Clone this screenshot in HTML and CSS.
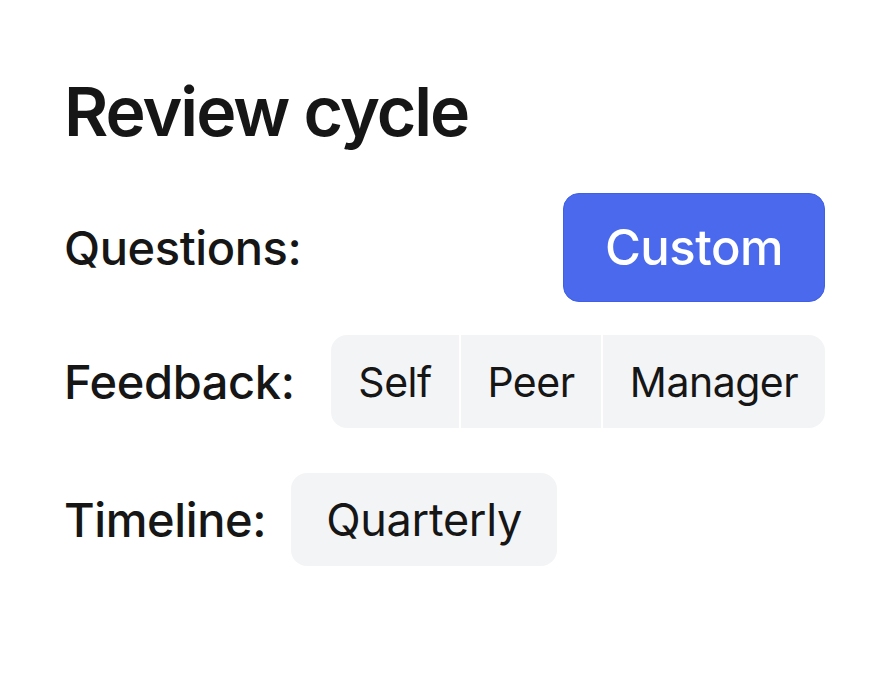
FILE: index.html
```html
<!DOCTYPE html>
<html lang="en">
<head>
<meta charset="utf-8">
<title>Review cycle</title>
<link rel="stylesheet" href="styles.css">
</head>
<body>
<main class="page">
  <h1 class="title">Review cycle</h1>
  <div class="row row-split row-questions">
    <span class="label">Questions:</span>
    <button class="btn-primary" type="button">Custom</button>
  </div>
  <div class="row row-split row-feedback">
    <span class="label">Feedback:</span>
    <div class="segmented">
      <span class="seg seg-self">Self</span>
      <span class="seg seg-peer">Peer</span>
      <span class="seg seg-manager">Manager</span>
    </div>
  </div>
  <div class="row row-timeline">
    <span class="label">Timeline:</span>
    <span class="chip">Quarterly</span>
  </div>
</main>
</body>
</html>
```
FILE: styles.css
```css
* { box-sizing: border-box; }
html, body {
  margin: 0;
  background: #ffffff;
}
body {
  font-family: Inter, "Noto Sans", "Liberation Sans", sans-serif;
  color: #161616;
}
.page {
  width: 877px;
  height: 680px;
  padding: 77px 52px 0 64px;
}
.title {
  margin: 0;
  font-size: 68px;
  line-height: 1;
  font-weight: 600;
  letter-spacing: -2px;
}
.row {
  display: flex;
  align-items: center;
  gap: 25px;
}
.row-split { justify-content: space-between; }
.row-questions { margin-top: 48px; }
.row-feedback { margin-top: 33px; }
.row-timeline { margin-top: 45px; }
.label {
  font-size: 47px;
  font-weight: 500;
  letter-spacing: -0.4px;
}
.btn-primary {
  width: 262px;
  height: 109px;
  border: 1px solid #3f5fe6;
  border-radius: 16px;
  background: #4a69ec;
  color: #ffffff;
  font-family: inherit;
  font-size: 49px;
  font-weight: 500;
  letter-spacing: -0.5px;
  padding: 0;
}
.segmented {
  display: flex;
  height: 93px;
  border-radius: 16px;
  overflow: hidden;
  gap: 2px;
}
.seg {
  display: flex;
  align-items: center;
  justify-content: center;
  background: #f3f4f6;
  font-size: 41px;
  font-weight: 400;
  letter-spacing: -0.5px;
}
.seg-self { width: 128px; }
.seg-peer { width: 140px; }
.seg-manager { width: 222px; }
.chip {
  display: flex;
  align-items: center;
  justify-content: center;
  width: 266px;
  height: 93px;
  border-radius: 16px;
  background: #f3f4f6;
  font-size: 45px;
  font-weight: 400;
  letter-spacing: -0.3px;
}
```
